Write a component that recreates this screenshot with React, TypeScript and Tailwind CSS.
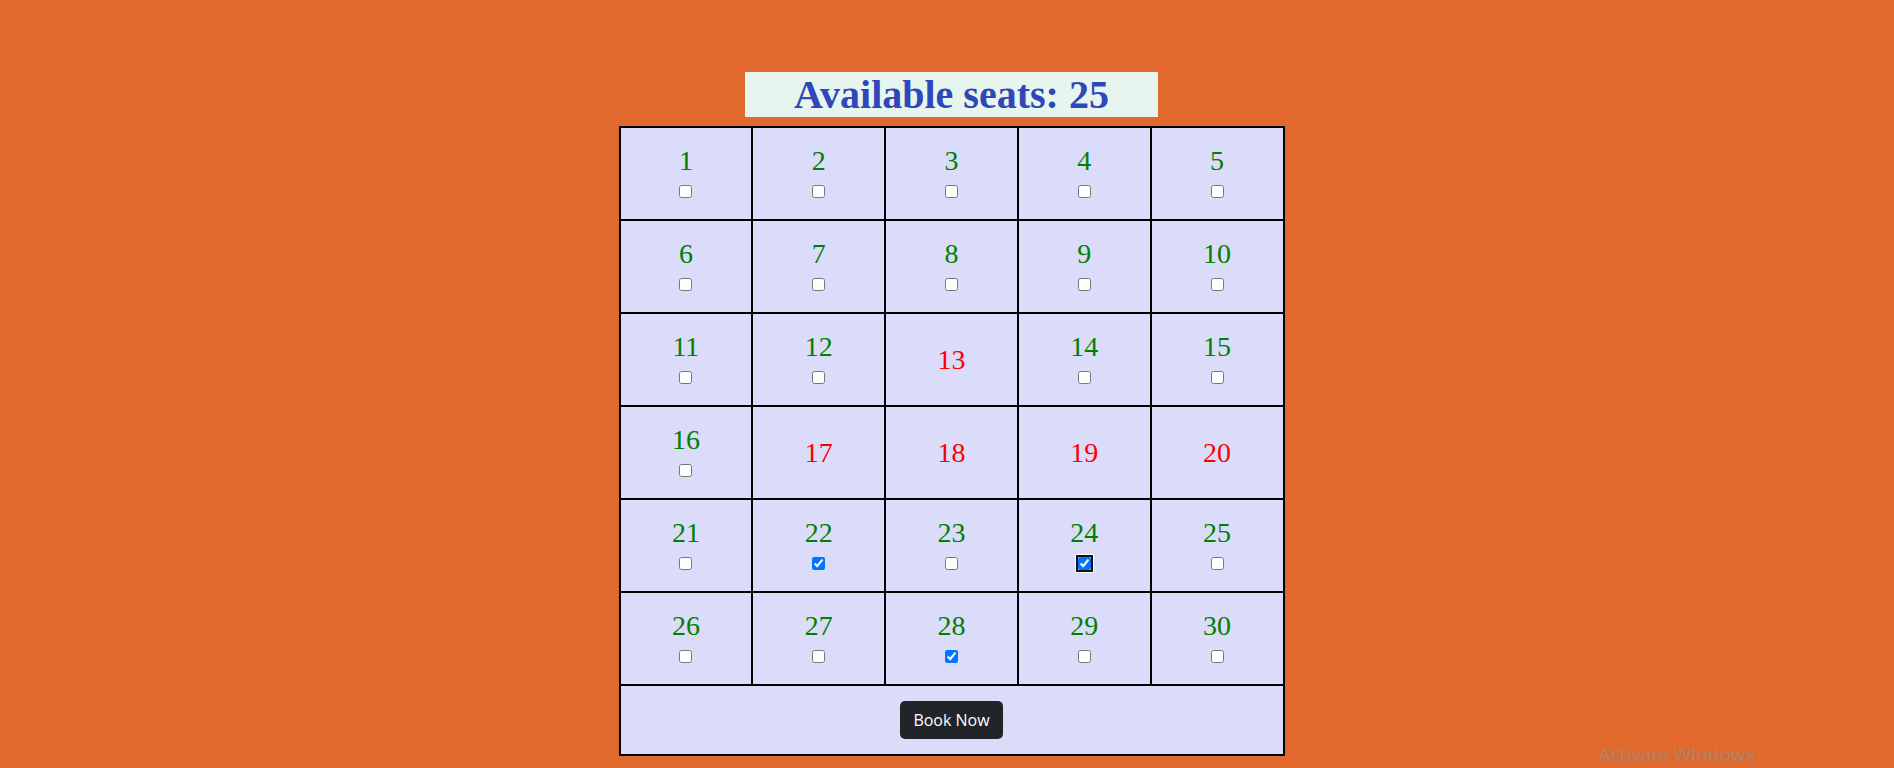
import React, {useState} from "react";

const booked = [13, 17, 18, 19, 20];
const seats = Array.from({length: 30}, (_, i) => i + 1);

export default function App() {
    const [picked, setPicked] = useState<number[]>([22, 24, 28]);

    function toggle(n: number) {
        setPicked(p => p.includes(n) ? p.filter(x => x !== n) : [...p, n]);
    }

    return (
        <div className="min-h-screen bg-[#e1692d] relative flex flex-col items-center pt-[72px] pl-[9px]">
            <div className="w-[413px] h-[45px] bg-[#e7f5ef] flex items-center justify-center">
                <h1 className="text-[40px] leading-none font-bold text-[#2f47b9]" style={{fontFamily: '"Liberation Serif", serif'}}>
                    Available seats: {seats.length - booked.length}
                </h1>
            </div>

            <div className="mt-[9px] w-[666px] bg-black p-[2px] grid grid-cols-5 gap-[2px]">
                {seats.map(n => {
                    const taken = booked.includes(n);
                    if (taken) {
                        return (
                            <div key={n} className="h-[91px] bg-[#dadcfa] flex items-center justify-center">
                                <span className="text-[28px] leading-[32px] text-[#ff0000]" style={{fontFamily: '"Liberation Serif", serif'}}>{n}</span>
                            </div>
                        );
                    }
                    return (
                        <div key={n} className="h-[91px] bg-[#dadcfa] flex flex-col items-center pt-[17px]">
                            <span className="text-[28px] leading-[32px] text-[#008000]" style={{fontFamily: '"Liberation Serif", serif'}}>{n}</span>
                            <input
                                type="checkbox"
                                checked={picked.includes(n)}
                                onChange={() => toggle(n)}
                                className={"mt-[8px] w-[13px] h-[13px] " + (n === 24 ? "outline-2 outline-solid outline-[#101010] shadow-[0_0_0_3px_#ffffff] rounded-[2px]" : "")}
                            />
                        </div>
                    );
                })}
                <div className="col-span-5 h-[68px] bg-[#dadcfa] flex items-center justify-center">
                    <button className="w-[103px] h-[38px] rounded-[5px] bg-[#212529] text-white text-[16px]" style={{fontFamily: '"Open Sans", sans-serif'}}>
                        Book Now
                    </button>
                </div>
            </div>

            <div className="absolute left-[1599px] top-[740px] text-[19px] text-[#a8846f]" style={{fontFamily: '"Open Sans", sans-serif'}}>
                Activate Windows
            </div>
        </div>
    );
}
